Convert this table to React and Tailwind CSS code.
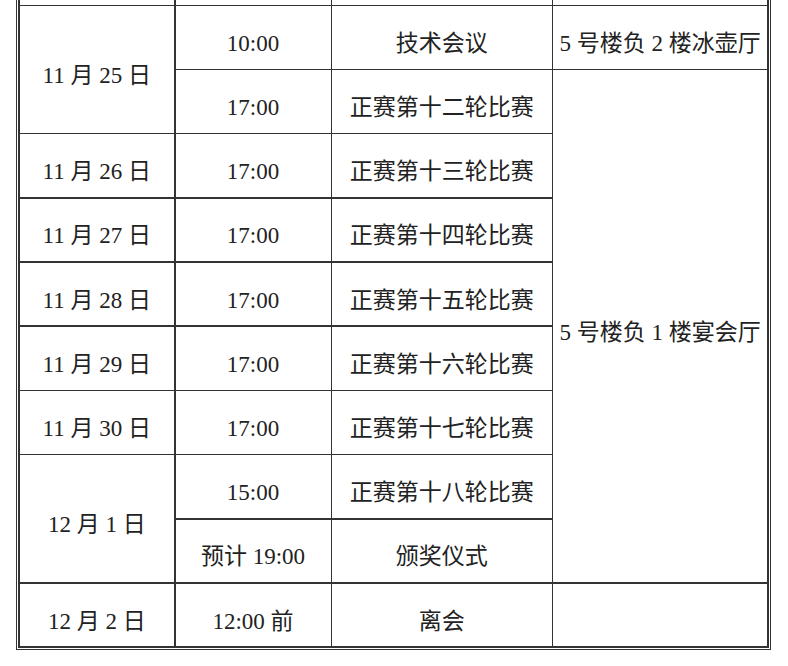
import React from "react";

const Cell = ({ className = "", children }) => (
  <div
    className={
      "flex items-center justify-center bg-white pt-[12px] text-[23px] leading-none text-[#222] whitespace-nowrap " +
      className
    }
  >
    {children}
  </div>
);

export default function App() {
  return (
    <div
      className="min-h-[666px] w-[788px] bg-white"
      style={{ fontFamily: '"Liberation Serif", "Noto Sans CJK SC", serif' }}
    >
      <div className="ml-[16px] w-[754.5px] border-x-[1.5px] border-b-[1.5px] border-[#333] bg-white px-[1px] pb-[1px]">
        <div className="grid grid-cols-[154.5px_155px_219.5px_1fr] grid-rows-[4.5px_repeat(10,62.7px)] gap-[1.5px] bg-[#333] px-[1.5px] pb-[1.5px]">
          {/* partial top row */}
          <div className="col-start-1 row-start-1 bg-white" />
          <div className="col-start-2 row-start-1 bg-white" />
          <div className="col-start-3 row-start-1 bg-white" />
          <div className="col-start-4 row-start-1 bg-white" />

          {/* 11/25 */}
          <Cell className="col-start-1 row-start-2 row-span-2">11 月 25 日</Cell>
          <Cell className="col-start-2 row-start-2">10:00</Cell>
          <Cell className="col-start-3 row-start-2">技术会议</Cell>
          <Cell className="col-start-4 row-start-2">5 号楼负 2 楼冰壶厅</Cell>

          <Cell className="col-start-2 row-start-3">17:00</Cell>
          <Cell className="col-start-3 row-start-3">正赛第十二轮比赛</Cell>
          <Cell className="col-start-4 row-start-3 row-span-8">5 号楼负 1 楼宴会厅</Cell>

          <Cell className="col-start-1 row-start-4">11 月 26 日</Cell>
          <Cell className="col-start-2 row-start-4">17:00</Cell>
          <Cell className="col-start-3 row-start-4">正赛第十三轮比赛</Cell>

          <Cell className="col-start-1 row-start-5">11 月 27 日</Cell>
          <Cell className="col-start-2 row-start-5">17:00</Cell>
          <Cell className="col-start-3 row-start-5">正赛第十四轮比赛</Cell>

          <Cell className="col-start-1 row-start-6">11 月 28 日</Cell>
          <Cell className="col-start-2 row-start-6">17:00</Cell>
          <Cell className="col-start-3 row-start-6">正赛第十五轮比赛</Cell>

          <Cell className="col-start-1 row-start-7">11 月 29 日</Cell>
          <Cell className="col-start-2 row-start-7">17:00</Cell>
          <Cell className="col-start-3 row-start-7">正赛第十六轮比赛</Cell>

          <Cell className="col-start-1 row-start-8">11 月 30 日</Cell>
          <Cell className="col-start-2 row-start-8">17:00</Cell>
          <Cell className="col-start-3 row-start-8">正赛第十七轮比赛</Cell>

          <Cell className="col-start-1 row-start-9 row-span-2">12 月 1 日</Cell>
          <Cell className="col-start-2 row-start-9">15:00</Cell>
          <Cell className="col-start-3 row-start-9">正赛第十八轮比赛</Cell>

          <Cell className="col-start-2 row-start-10">预计 19:00</Cell>
          <Cell className="col-start-3 row-start-10">颁奖仪式</Cell>

          <Cell className="col-start-1 row-start-11">12 月 2 日</Cell>
          <Cell className="col-start-2 row-start-11">12:00 前</Cell>
          <Cell className="col-start-3 row-start-11">离会</Cell>
          <Cell className="col-start-4 row-start-11" />
        </div>
      </div>
    </div>
  );
}
